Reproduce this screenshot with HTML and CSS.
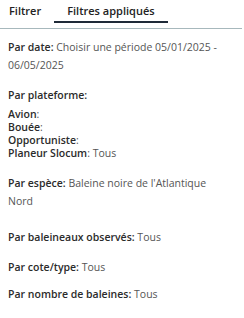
FILE: index.html
```html
<!DOCTYPE html>
<html>
<head>
<meta charset="utf-8">
<title>Filtres appliqués</title>
<link rel="stylesheet" href="styles.css">
</head>
<body>
<div class="panel">
  <ul class="tabs">
    <li>Filtrer</li>
    <li class="on">Filtres appliqués</li>
  </ul>
  <div class="filters">
    <p><b>Par date:</b> Choisir une période 05/01/2025 - 06/05/2025</p>
    <p class="head"><b>Par plateforme:</b></p>
    <ul class="platforms">
      <li><b>Avion</b>:</li>
      <li><b>Bouée</b>:</li>
      <li><b>Opportuniste</b>:</li>
      <li><b>Planeur Slocum</b>: Tous</li>
    </ul>
    <p class="wide"><b>Par espèce:</b> Baleine noire de l'Atlantique Nord</p>
    <p><b>Par baleineaux observés:</b> Tous</p>
    <p class="tight"><b>Par cote/type:</b> Tous</p>
    <p><b>Par nombre de baleines:</b> Tous</p>
  </div>
</div>
</body>
</html>
```

FILE: styles.css
```css
body{ margin:0; background:#fff; font-family:"Open Sans","Noto Sans",sans-serif; color:#555;}
ul,li,p{ margin:0; padding:0; list-style:none;}
b{ font-weight:600; color:#2b2b2b;}
.panel{ width:242px;}
.tabs{ display:flex; border-bottom:1.5px solid #a7b8bc; height:29px; box-sizing:border-box;}
.tabs li{ font-size:11px; font-weight:600; color:#222; line-height:22px; padding:0 9px; border-bottom:2px solid transparent; height:21px;}
.tabs li.on{ border-bottom-color:#1f2a38; padding:0 13px; margin-left:4px;}
.filters{ padding:9px 12px 0 8px; font-size:10.5px; line-height:18px;}
.filters p{ margin-bottom:12px;}
.filters p.head{ margin-bottom:4px;}
.filters p.wide{ margin-bottom:18px;}
.filters p.tight{ margin-bottom:9px;}
.platforms{ line-height:13px; margin-bottom:14px;}
```
